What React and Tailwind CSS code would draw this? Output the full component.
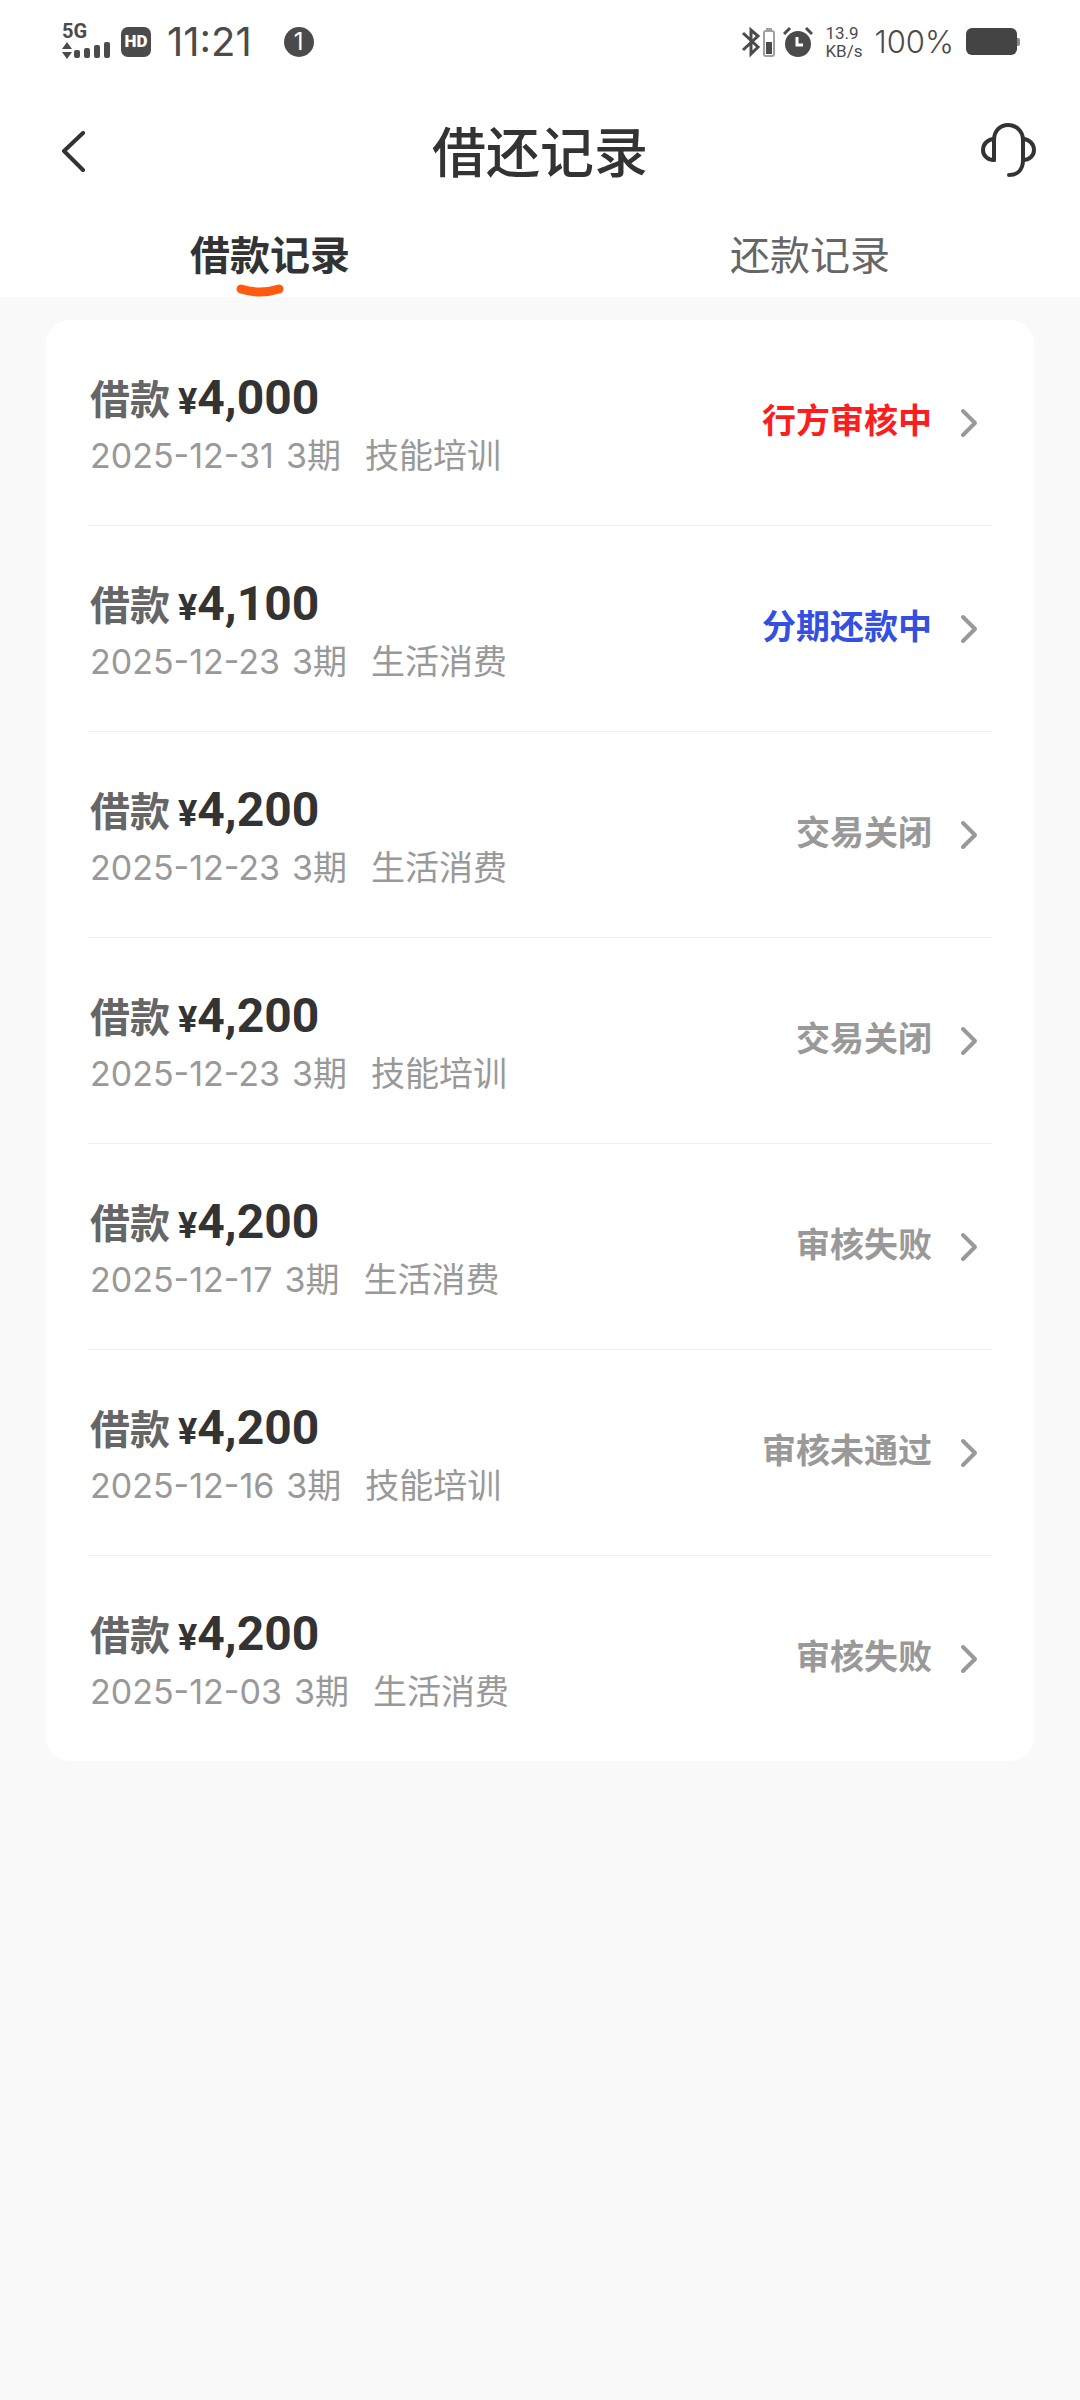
import { useState } from 'react';

const FONT = "font-[Inter,'Noto_Sans_CJK_SC',sans-serif]";

const loans = [
  { id: 1, amount: '4,000', date: '2025-12-31', usage: '技能培训', status: '行方审核中', color: 'text-[#fa1e1e]' },
  { id: 2, amount: '4,100', date: '2025-12-23', usage: '生活消费', status: '分期还款中', color: 'text-[#3350e0]' },
  { id: 3, amount: '4,200', date: '2025-12-23', usage: '生活消费', status: '交易关闭', color: 'text-[#999999]' },
  { id: 4, amount: '4,200', date: '2025-12-23', usage: '技能培训', status: '交易关闭', color: 'text-[#999999]' },
  { id: 5, amount: '4,200', date: '2025-12-17', usage: '生活消费', status: '审核失败', color: 'text-[#999999]' },
  { id: 6, amount: '4,200', date: '2025-12-16', usage: '技能培训', status: '审核未通过', color: 'text-[#999999]' },
  { id: 7, amount: '4,200', date: '2025-12-03', usage: '生活消费', status: '审核失败', color: 'text-[#999999]' },
];

function SignalIcon() {
  return (
    <svg width="48" height="18" viewBox="0 0 48 18" fill="currentColor">
      <path d="M5 0l5 7H0zM5 17l-5-7h10z" />
      <rect x="12" y="8" width="6" height="8" rx="2" />
      <rect x="22" y="6" width="6" height="10" rx="2" />
      <rect x="32" y="3" width="6" height="13" rx="2" />
      <rect x="42" y="0" width="6" height="16" rx="2" />
    </svg>
  );
}

function BluetoothIcon() {
  return (
    <svg width="34" height="32" viewBox="0 0 34 32" fill="none">
      <path d="M2 7l15 14-7 7V4l7 6L2 24" stroke="currentColor" strokeWidth="3" />
      <rect x="23" y="5" width="10" height="25" rx="2" stroke="#a0a0a0" strokeWidth="2" />
      <rect x="25" y="2" width="6" height="2" fill="#a0a0a0" />
      <rect x="25" y="16" width="6" height="12" fill="currentColor" />
    </svg>
  );
}

function AlarmIcon() {
  return (
    <svg width="30" height="32" viewBox="0 0 30 32" fill="none">
      <circle cx="15" cy="18" r="13" fill="currentColor" />
      <path d="M1 8l6-6M29 8l-6-6" stroke="currentColor" strokeWidth="3" />
      <path d="M14 11v8h6" stroke="white" strokeWidth="3" />
    </svg>
  );
}

function BatteryIcon() {
  return (
    <svg width="56" height="28" viewBox="0 0 56 28">
      <rect x="49" y="10" width="5" height="8" rx="2" fill="#8a8a8a" />
      <rect width="51" height="27" rx="6" fill="#444444" />
    </svg>
  );
}

function StatusBar() {
  return (
    <div className="flex h-21 items-center justify-between pr-[58px] pl-[62px] text-[#4b4b4b]">
      <div className="flex items-center">
        <div className="flex flex-col gap-1">
          <span className="font-[Roboto] text-[20px] leading-[14px] font-bold">5G</span>
          <SignalIcon />
        </div>
        <span className="ml-[11px] flex size-[30px] items-center justify-center rounded-[7px] bg-[#4b4b4b] font-[Roboto] text-[17px] font-black text-white">
          HD
        </span>
        <span className="ml-4 text-[40px]">11:21</span>
        <span className="ml-8 flex size-[30px] items-center justify-center rounded-full bg-[#4b4b4b] text-[24px] text-white">
          1
        </span>
      </div>
      <div className="flex items-center">
        <BluetoothIcon />
        <span className="ml-2">
          <AlarmIcon />
        </span>
        <span className="ml-3 flex flex-col font-[Roboto] text-[17px] leading-[18px]">
          <span>13.9</span>
          <span>KB/s</span>
        </span>
        <span className="ml-3 text-[31px] font-light">100%</span>
        <span className="ml-3">
          <BatteryIcon />
        </span>
      </div>
    </div>
  );
}

function Header() {
  return (
    <header className="flex h-34 items-center justify-between px-11 text-[#333333]">
      <button aria-label="返回" className="flex w-15 justify-start pl-4">
        <svg width="26" height="42" viewBox="0 0 26 42" fill="none">
          <path d="M23 2L4 20l19 19" stroke="currentColor" strokeWidth="4" strokeLinecap="round" strokeLinejoin="round" />
        </svg>
      </button>
      <h1 className="pt-1 text-[54px] leading-[64px] font-medium">借还记录</h1>
      <button aria-label="客服" className="flex w-15 justify-end">
        <svg width="60" height="60" viewBox="0 0 60 60" fill="none" stroke="currentColor" strokeWidth="4" strokeLinecap="round" strokeLinejoin="round">
          <path d="M18 38V18C18 9 24 3 32 3s15 6 15 15v20c0 9-5 15-14 15" />
          <path d="M18 17c-6 0-11 5-11 11s5 10 11 10" />
          <path d="M47 17c6 0 11 5 11 11s-5 10-11 10" />
        </svg>
      </button>
    </header>
  );
}

function Tabs({ active, onChange }) {
  const tabs = ['借款记录', '还款记录'];

  return (
    <div role="tablist" className="flex h-[77px]">
      {tabs.map((tab, i) => (
        <button
          key={tab}
          role="tab"
          aria-selected={active === i}
          onClick={() => onChange(i)}
          className={`relative flex flex-1 justify-center pt-3 text-[40px] leading-[48px] ${
            active === i ? 'font-bold text-[#333333]' : 'text-[#666666]'
          }`}
        >
          {tab}
          {active === i && (
            <svg className="absolute bottom-0 left-1/2 -ml-[34px]" width="48" height="13" viewBox="0 0 48 13" fill="none">
              <path d="M5 5q19 6 38 0" stroke="#ff5a0f" strokeWidth="9" strokeLinecap="round" />
            </svg>
          )}
        </button>
      ))}
    </div>
  );
}

function LoanRow({ loan }) {
  return (
    <li className="border-b border-[#eeeeee] last:border-b-0">
      <button className="flex h-[205px] w-full items-center justify-between pr-3 pl-[2px] text-left">
        <span className="flex flex-col pt-1">
          <span className="flex items-baseline leading-[58px] font-bold">
            <span className="text-[40px] text-[#666666]">借款</span>
            <span className="ml-2 font-[Roboto] text-[36px] text-[#333333]">¥</span>
            <span className="font-[Roboto] text-[48px] text-[#333333]">{loan.amount}</span>
          </span>
          <span className="flex text-[34px] leading-[50px] text-[#999999]">
            <span>{loan.date}</span>
            <span className="ml-3">3期</span>
            <span className="ml-6">{loan.usage}</span>
          </span>
        </span>
        <span className="flex items-center">
          <span className={`pb-1 text-[34px] leading-[52px] font-bold ${loan.color}`}>{loan.status}</span>
          <svg className="ml-7" width="20" height="30" viewBox="0 0 20 30" fill="none">
            <path d="M3 3l12 12L3 27" stroke="#999999" strokeWidth="4" strokeLinecap="round" strokeLinejoin="round" />
          </svg>
        </span>
      </button>
    </li>
  );
}

export default function App() {
  const [tab, setTab] = useState(0);

  return (
    <div className={`min-h-screen bg-[#f9f9f9] ${FONT}`}>
      <div className="bg-white">
        <StatusBar />
        <Header />
        <Tabs active={tab} onChange={setTab} />
      </div>

      <main className="px-[46px] pt-[23px]">
        <ul className="rounded-[24px] bg-white px-[42px]">
          {tab === 0 && loans.map((loan) => <LoanRow key={loan.id} loan={loan} />)}
        </ul>
      </main>
    </div>
  );
}
